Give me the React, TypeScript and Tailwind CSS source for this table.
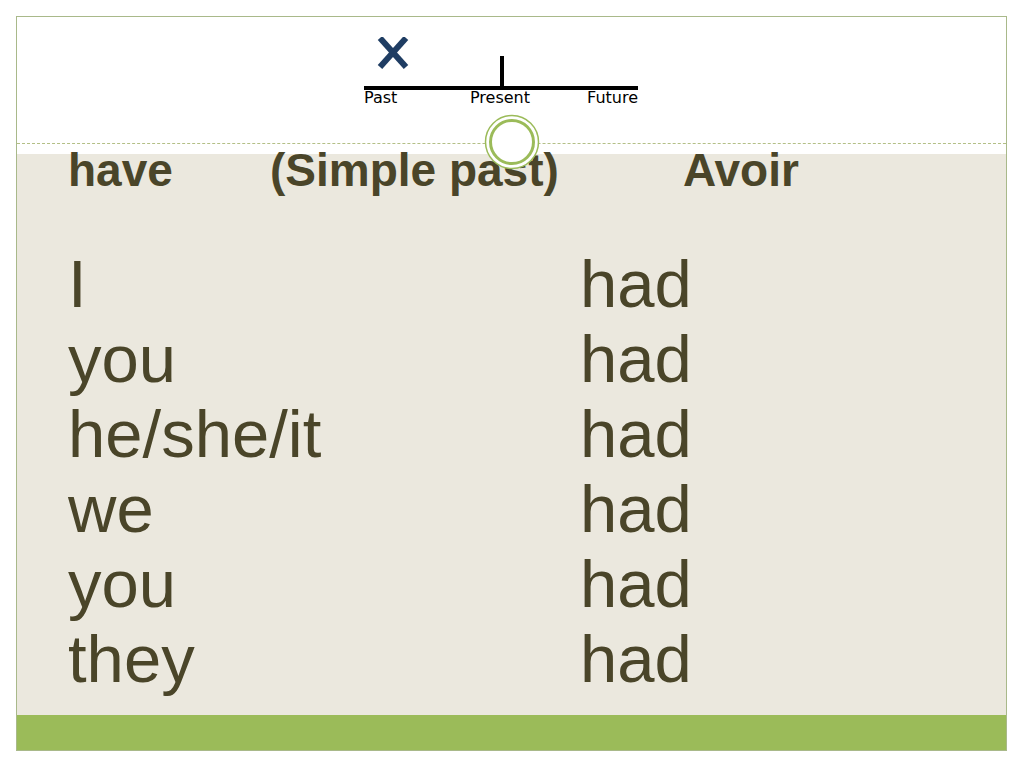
const pronouns = ["I", "you", "he/she/it", "we", "you", "they"];

function Timeline() {
  return (
    <div className="ml-[347px] w-[274px]">
      <svg width="274" height="53" viewBox="0 0 274 53" className="block">
        {/* X mark */}
        <line x1="16" y1="1" x2="42" y2="30" stroke="#1f3d63" strokeWidth="6" />
        <line x1="42" y1="1" x2="16" y2="30" stroke="#1f3d63" strokeWidth="6" />
        {/* present tick */}
        <rect x="136" y="19" width="4" height="32" fill="#000" />
        {/* time line */}
        <rect x="0" y="49" width="274" height="4" fill="#000" />
      </svg>
      <div className="relative h-[16px] font-['DejaVu_Sans',sans-serif] text-[16px] font-medium leading-[16px] text-black">
        <span className="absolute left-0 top-0">Past</span>
        <span className="absolute left-[106px] top-0">Present</span>
        <span className="absolute right-0 top-0">Future</span>
      </div>
    </div>
  );
}

export default function App() {
  return (
    <div className="h-[768px] w-[1024px] bg-white pl-[16px] pt-[16px] font-['Liberation_Sans',Arial,sans-serif]">
      <div className="relative h-[735px] w-[991px] border border-[#a9b98a] bg-white">
        {/* header */}
        <div className="h-[126px] pt-[20px]">
          <Timeline />
        </div>
        <div className="border-t border-dashed border-[#b3bf86]" />

        {/* slide body */}
        <div className="h-[571px] bg-[linear-gradient(to_bottom,#ffffff_10px,#ebe8de_10px)] pl-[51px] text-[#4a4529]">
          <div className="flex text-[46px] font-bold leading-[52px]">
            <span className="w-[202px]">have</span>
            <span className="w-[413px]">(Simple past)</span>
            <span>Avoir</span>
          </div>
          <div className="mt-[50px] grid grid-cols-[512px_1fr] text-[67px] leading-[75px]">
            {pronouns.map((p, i) => (
              <div key={i} className="contents">
                <span>{p}</span>
                <span>had</span>
              </div>
            ))}
          </div>
        </div>

        <div className="h-[35px] bg-[#9bbb59]" />

        {/* ring over the divider */}
        <svg
          width="56"
          height="56"
          viewBox="0 0 56 56"
          className="absolute left-[467px] top-[97px]"
        >
          <circle cx="28" cy="28" r="26.5" fill="#fff" stroke="#9bbb59" strokeWidth="1.5" />
          <circle cx="28" cy="28" r="21.5" fill="#fff" stroke="#9bbb59" strokeWidth="3" />
        </svg>
      </div>
    </div>
  );
}
